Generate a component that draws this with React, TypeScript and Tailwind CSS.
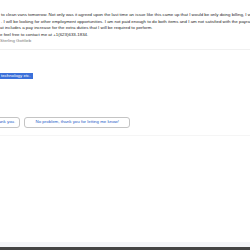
export default function App() {
  const font = { fontFamily: '"Liberation Sans", Arial, sans-serif' };
  return (
    <div className="w-[250px] h-[250px] overflow-hidden bg-white flex flex-col relative" style={font}>
      <div className="pt-[12px] text-[4.4px] leading-[6.5px] text-[#262626] whitespace-nowrap">
        <div className="pl-[1px]">to clean vans tomorrow. Not only was it agreed upon the last time an issue like this came up that I would be only doing billing, I w</div>
        <div className="pl-[1px]">. I will be looking for other employment opportunities. I am not paid enough to do both items and I am not satisfied with the payrate</div>
        <div>at includes a pay increase for the extra duties that I will be required to perform.</div>
        <div>e feel free to contact me at +1(623)633-1834.</div>
        <div className="text-[#7a7a7a]">Sterling Gottlieb</div>
      </div>
      <div className="mt-[4px] h-px bg-[#f0f0f0]" />
      <div className="mt-[23px] flex">
        <span className="bg-[#3b70da] text-white text-[4.4px] leading-[6px] pl-[1px] pr-[2px] whitespace-nowrap">technology  etc.</span>
      </div>
      <div className="mt-[38px] flex gap-[4px] ml-[-10px]">
        <div className="h-[11px] px-[4px] flex items-center rounded-[3px] border border-[#c4c4c4] text-[#1f5cc8] text-[4.4px] whitespace-nowrap">thank you.</div>
        <div className="h-[11px] w-[106px] flex items-center justify-center rounded-[3px] border border-[#c4c4c4] text-[#1f5cc8] text-[4.4px] whitespace-nowrap">No problem, thank you for letting me know!</div>
      </div>
      <div className="mt-[7px] h-px bg-[#f5f5f5]" />
      <div className="flex-1" />
      <div className="h-[5px] bg-[#f4f5f8]" />
      <div className="h-[3px] bg-[#454545]" />
    </div>
  );
}
